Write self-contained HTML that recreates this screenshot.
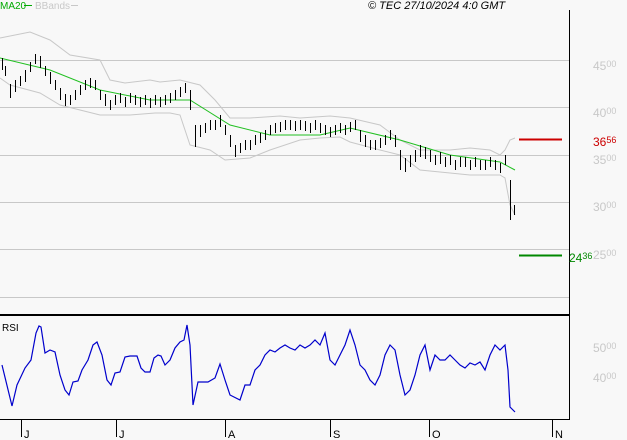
<!DOCTYPE html>
<html><head><style>
html,body{margin:0;padding:0;background:#f8f8f8;}
svg{display:block;font-family:"Liberation Sans",sans-serif;}
</style></head><body>
<svg width="627" height="440" viewBox="0 0 627 440" xmlns="http://www.w3.org/2000/svg">
<rect width="627" height="440" fill="#f8f8f8"/>
<g stroke="#c8c8c8" stroke-width="1">
<line x1="0" y1="60.5" x2="569" y2="60.5"/>
<line x1="0" y1="107.5" x2="569" y2="107.5"/>
<line x1="0" y1="155.5" x2="569" y2="155.5"/>
<line x1="0" y1="202.5" x2="569" y2="202.5"/>
<line x1="0" y1="249.5" x2="569" y2="249.5"/>
<line x1="0" y1="297.5" x2="569" y2="297.5"/>
</g>
<g fill="none" stroke="#c8c8c8" stroke-width="1">
<polyline points="0,38 30,32 50,40 70,55 100,60 110,80 125,83 150,80 160,82 180,80 200,85 215,100 230,118 250,118 280,116 300,118 330,116 350,118 380,125 400,140 420,150 450,150 470,148 490,150 500,155 505,150 510,140 515,138"/>
<polyline points="0,78 10,85 40,93 60,105 80,110 100,115 130,115 155,113 170,113 180,115 190,145 210,150 225,160 250,158 270,150 300,140 320,138 340,137 350,142 380,150 400,155 420,170 440,172 470,175 500,175 505,178 510,205 515,215"/>
</g>
<polyline fill="none" stroke="#22c022" stroke-width="1" points="0,58 50,70 100,90 150,100 190,100 230,125 270,135 320,135 350,128 400,140 450,155 500,162 515,170"/>
<g stroke="#000" stroke-width="1" fill="none" shape-rendering="crispEdges" transform="translate(0.5,0)">
<path d="M2,58v12 M5,66v10 M10,84v14 M15,80v12 M20,76v10 M25,70v12 M30,62v10 M35,54v10 M40,56v12 M45,66v10 M50,72v12 M55,80v10 M60,88v12 M65,94v12 M70,95v10 M75,90v10 M80,85v10 M85,80v10 M90,78v10 M95,80v10 M100,90v10 M105,94v12 M110,100v10 M115,95v10 M120,93v10 M125,97v10 M130,93v10 M135,95v10 M140,97v10 M145,95v10 M150,98v10 M155,95v10 M160,97v10 M165,95v10 M170,93v10 M175,90v10 M180,87v10 M185,83v10 M190,90v20 M195,125v22 M200,125v12 M205,123v10 M210,120v10 M215,120v10 M220,115v12 M225,125v10 M230,135v12 M235,145v12 M240,143v10 M245,140v10 M250,140v10 M255,135v10 M260,133v10 M265,130v10 M270,125v10 M275,123v10 M280,122v10 M285,120v10 M290,120v10 M295,121v10 M300,120v10 M305,121v10 M310,123v10 M315,120v10 M320,123v10 M325,125v10 M330,127v10 M335,125v10 M340,123v10 M345,125v10 M350,122v10 M355,120v10 M360,130v12 M365,135v12 M370,140v10 M375,140v10 M380,138v10 M385,135v10 M390,130v10 M395,135v12 M400,150v20 M405,158v14 M410,155v12 M415,150v12 M420,145v12 M425,147v12 M430,150v12 M435,155v10 M440,152v12 M445,157v10 M450,155v10 M455,160v10 M460,157v10 M465,157v10 M470,160v10 M475,157v10 M480,160v10 M485,160v10 M490,157v10 M495,160v10 M500,163v10 M505,155v10 M510,180v40 M514,205v10"/>
</g>
<line x1="519" y1="139.5" x2="562" y2="139.5" stroke="#cc0000" stroke-width="2"/>
<line x1="519" y1="255.5" x2="562" y2="255.5" stroke="#008800" stroke-width="2"/>
<line x1="569.5" y1="10" x2="569.5" y2="420" stroke="#000" stroke-width="1"/>
<line x1="0" y1="315" x2="570" y2="315" stroke="#000" stroke-width="2"/>
<line x1="0" y1="419.5" x2="570" y2="419.5" stroke="#000" stroke-width="1"/>
<polyline fill="none" stroke="#0000cc" stroke-width="1.2" points="2,365 12,406 17,385 25,368 31,360 36,333 39,326 41,327 45,353 50,350 55,352 60,375 65,390 69,395 73,382 78,381 82,370 88,360 93,345 97,342 102,355 107,380 111,385 115,373 120,372 125,357 130,356 137,356 141,368 145,372 150,372 154,358 158,355 161,356 165,365 170,360 175,348 180,342 184,340 187,325 190,345 193,405 198,382 208,382 215,378 220,364 225,380 230,395 240,400 245,385 250,385 255,370 260,365 265,355 270,350 275,352 280,348 285,345 290,348 295,350 300,345 305,348 310,345 315,340 320,345 325,333 330,360 335,365 340,355 345,345 350,330 355,345 360,365 365,370 370,380 375,385 380,375 385,355 390,345 395,350 400,375 405,395 410,390 415,375 420,355 425,345 430,370 435,355 440,360 445,360 450,355 455,360 460,365 465,368 470,363 475,365 480,362 485,370 490,355 495,345 500,350 505,345 508,370 510,407 515,412"/>
<g stroke="#000" stroke-width="1">
<line x1="21.5" y1="419" x2="21.5" y2="437"/>
<line x1="116.5" y1="419" x2="116.5" y2="437"/>
<line x1="225.5" y1="419" x2="225.5" y2="437"/>
<line x1="330.5" y1="419" x2="330.5" y2="437"/>
<line x1="429.5" y1="419" x2="429.5" y2="437"/>
<line x1="552.5" y1="419" x2="552.5" y2="437"/>
</g>
<g font-size="11" fill="#000">
<text x="24" y="438">J</text><text x="119" y="438">J</text><text x="228" y="438">A</text>
<text x="333" y="438">S</text><text x="432" y="438">O</text><text x="555" y="438">N</text>
<text x="2" y="331" font-size="10">RSI</text>
</g>
<g fill="#c8c8c8" font-size="12">
<text x="593" y="70">45<tspan font-size="9" dy="-3">00</tspan></text>
<text x="593" y="117">40<tspan font-size="9" dy="-3">00</tspan></text>
<text x="593" y="164">35<tspan font-size="9" dy="-3">00</tspan></text>
<text x="593" y="211">30<tspan font-size="9" dy="-3">00</tspan></text>
<text x="593" y="259">25<tspan font-size="9" dy="-3">00</tspan></text>
<text x="593" y="352">50<tspan font-size="9" dy="-3">00</tspan></text>
<text x="593" y="382">40<tspan font-size="9" dy="-3">00</tspan></text>
</g>
<text x="593" y="146" fill="#cc0000" font-size="12">36<tspan font-size="9" dy="-3">56</tspan></text>
<text x="569" y="262" fill="#008800" font-size="12">24<tspan font-size="9" dy="-3">36</tspan></text>
<text x="0" y="9" font-size="10" fill="#00aa00">MA20</text>
<line x1="24" y1="5.5" x2="32" y2="5.5" stroke="#00aa00"/>
<text x="35" y="9" font-size="10" fill="#c8c8c8">BBands</text>
<line x1="71" y1="5.5" x2="78" y2="5.5" stroke="#c8c8c8"/>
<text x="368" y="9" font-size="11" font-style="italic" fill="#000">© TEC 27/10/2024 4:0 GMT</text>
</svg>
</body></html>
